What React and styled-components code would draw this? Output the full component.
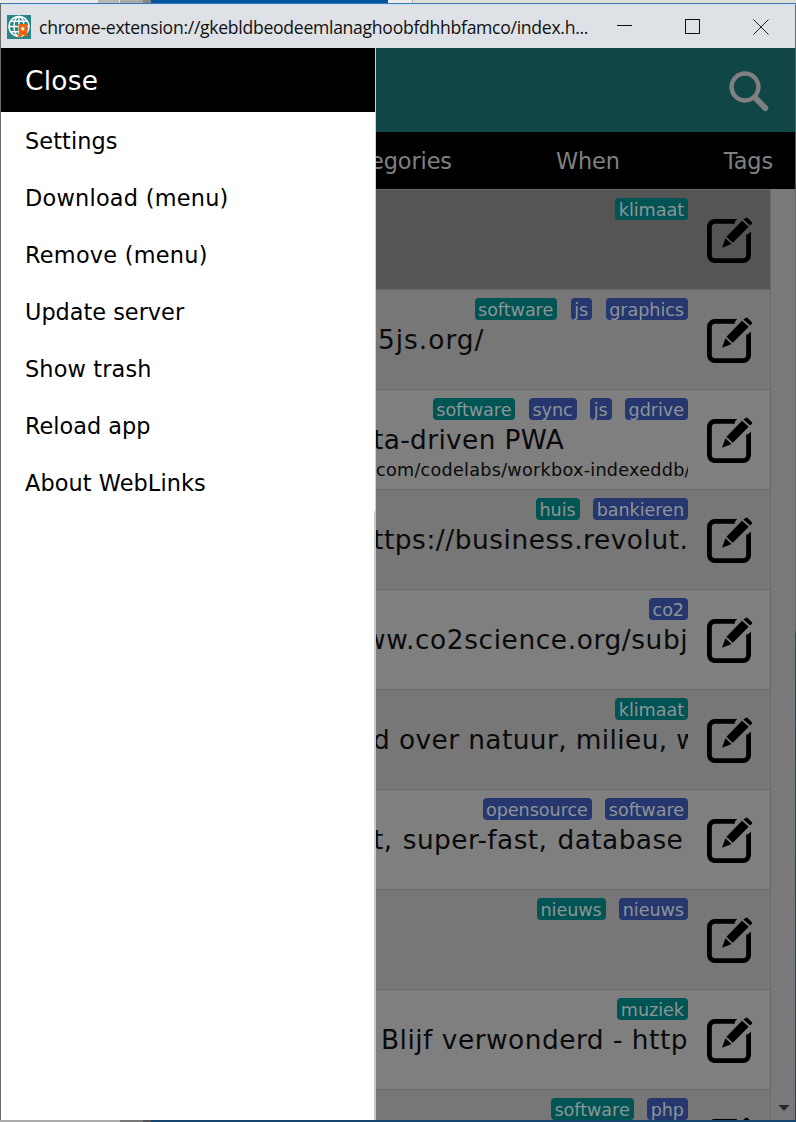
import React from 'react';
import styled, { createGlobalStyle } from 'styled-components';

const GlobalStyle = createGlobalStyle`
  *, *::before, *::after { box-sizing: border-box; }
  body { margin: 0; overflow: hidden; }
`;

const Desktop = styled.div`
  width: 796px;
  height: 1122px;
  display: flex;
  flex-direction: column;
  overflow: hidden;
  font-family: Verdana, 'DejaVu Sans', sans-serif;
`;

const TopStrip = styled.div`
  height: 3px;
  background: linear-gradient(to right, #e9e9e9 0 98px, #b9b7b4 98px 119px, #e6e6e6 119px 120px, #aaa9a7 120px 143px, #888 143px 151px, #0055a3 151px 388px, #ececec 388px 412px, #b5b5b5 412px 413px, #dfdcda 413px);
`;

const BottomStrip = styled.div`
  height: 2px;
  background: linear-gradient(to right, #aaa 0 120px, #777 120px 143px, #555 143px 151px, #16446e 151px);
`;

const Window = styled.div`
  height: 1117px;
  display: flex;
  flex-direction: column;
  border-top: 1px solid #3f78b0;
  border-left: 1px solid #6c6c6c;
`;

const TitleBar = styled.div`
  height: 44px;
  flex: none;
  display: flex;
  align-items: center;
  background: #dee1e6;
  border-top: 1px solid #c4e2fa;
  border-right: 1px solid #6c6c6c;
  padding-left: 6px;
`;

const WindowTitle = styled.div`
  width: 552px;
  margin-left: 8px;
  font: 400 17.6px/24px 'Open Sans', sans-serif;
  letter-spacing: -0.29px;
  color: #111;
  white-space: nowrap;
`;

const WindowControls = styled.div`
  display: flex;
  align-items: center;
  gap: 52px;
  margin-left: 26px;
  svg { display: block; }
`;

const Viewport = styled.div`
  position: relative;
  height: 1072px;
  display: flex;
  flex-direction: column;
  overflow: hidden;
`;

const Header = styled.header`
  height: 84px;
  flex: none;
  display: flex;
  justify-content: flex-end;
  padding: 22px 25px 0 0;
  background: #114646;
  border-right: 1px solid #5d6363;
`;

const Tabs = styled.nav`
  height: 57px;
  flex: none;
  display: flex;
  justify-content: flex-end;
  gap: 104px;
  padding-right: 22px;
  background: #000;
  border-right: 1px solid #555;
`;

const Tab = styled.span`
  font-size: 22.4px;
  line-height: 59px;
  letter-spacing: -0.1px;
  color: #808080;
`;

const Content = styled.div`
  display: flex;
  height: 931px;
`;

const List = styled.div`
  width: 770px;
  border-right: 1px solid #6a6a6a;
`;

const Scrollbar = styled.div`
  width: 25px;
  display: flex;
  align-items: flex-end;
  justify-content: center;
  padding: 0 0 8px 1px;
  background: #797979;
  border-right: 1px solid;
  border-image: linear-gradient(#666 0 440px, #14565c 446px, #1c4468 100%) 1;
  svg { display: block; }
`;

const tones = { selected: '#555555', light: '#7f7f7f', dark: '#777777' };

const Row = styled.div`
  height: 100px;
  display: flex;
  border-top: 1px solid #6a6a6a;
  background: ${(p) => tones[p.$tone]};
`;

const RowText = styled.div`
  width: 687px;
  height: 99px;
  overflow: hidden;
  padding-top: 8px;
`;

const TagLine = styled.div`
  display: flex;
  justify-content: flex-end;
  gap: 13.5px;
`;

const Tag = styled.span`
  height: 22px;
  padding: 0 4px 0 3.5px;
  border-radius: 4px;
  background: ${(p) => (p.$category ? '#005454' : '#26376f')};
  color: #8c9496;
  font-size: 17.6px;
  line-height: 24px;
  letter-spacing: -0.05px;
`;

const RowTitle = styled.div`
  padding-left: ${(p) => p.$inset}px;
  font-size: 26.4px;
  line-height: 34px;
  margin-top: 3px;
  letter-spacing: ${(p) => p.$tracking ?? 0.4}px;
  word-spacing: ${(p) => p.$wordGap ?? 0}px;
  color: #0a0a0a;
  white-space: nowrap;
`;

const RowUrl = styled.div`
  padding-left: ${(p) => p.$inset}px;
  margin-top: 1px;
  font-size: 17.6px;
  line-height: 24px;
  letter-spacing: 0.27px;
  color: #0a0a0a;
  white-space: nowrap;
`;

const EditButton = styled.div`
  padding: 27px 0 0 18px;
  svg { display: block; }
`;

const Drawer = styled.aside`
  position: absolute;
  inset: 0 auto 0 0;
  width: 375px;
  display: flex;
  flex-direction: column;
`;

const MenuPanel = styled.div`
  height: 463px;
  background: #fff;
  border-right: 1px solid #cfcfcf;
`;

const DrawerFill = styled.div`
  flex: 1;
  background: #fff;
  border-right: 2px solid #c9c9c9;
`;

const CloseItem = styled.div`
  height: 64px;
  padding-left: 24px;
  background: #000;
  color: #fff;
  font-size: 26.4px;
  line-height: 65px;
  letter-spacing: 0.25px;
`;

const MenuItem = styled.div`
  height: 57px;
  padding-left: 24px;
  color: #000;
  font-size: 22.4px;
  line-height: 59px;
  letter-spacing: ${(p) => p.$tracking ?? 0}px;
`;

const SiteIcon = () => (
  <svg width="24" height="24" viewBox="0 0 24 24">
    <rect width="24" height="24" fill="#278588" />
    <g fill="none" stroke="#fff" strokeWidth="1.4">
      <circle cx="12" cy="11.5" r="10" />
      <ellipse cx="12" cy="11.5" rx="5" ry="10" />
      <path d="M12 1.5v20M2 11.5h20M3.5 6.2h17M3.5 16.8h17" />
    </g>
    <path d="M11.5 9h8.7v13l-3.2-2-1.3 0-3.6 3-1.6-1 1.4-3z" fill="#ef6412" />
    <path d="M15.8 11.3l.7 1.5 1.6.2-1.2 1.1.3 1.6-1.4-.8-1.4.8.3-1.6-1.2-1.1 1.6-.2z" fill="#fff" />
  </svg>
);

const SearchIcon = () => (
  <svg width="42" height="42" viewBox="0 0 42 42" fill="none" stroke="#808080">
    <circle cx="17" cy="17" r="13.4" strokeWidth="4.5" />
    <path d="M27 27.5L37.2 38" strokeWidth="6" strokeLinecap="round" />
  </svg>
);

const EditIcon = () => (
  <svg width="47" height="47" viewBox="0 0 47 47">
    <path d="M28.8 4.4H8.9a5.5 5.5 0 0 0-5.5 5.5v28.2a5.5 5.5 0 0 0 5.5 5.5h28.2a5.5 5.5 0 0 0 5.5-5.5V17.6" fill="none" stroke="#000" strokeWidth="4.8" />
    <path d="M27 2h4.3l-4.4 4.8H27zM45 14.8v4h-4.8v-.3z" />
    <path d="M16 30.8l3.4-9.5 6.2 5.7zM20.5 19.8L36 3.7l6.7 6.1-15.9 15.9zM37.4 2.5L39.6.9q1-.8 2 0l4.1 4.1q.9 1 .2 1.8l-1.7 1.8z" />
  </svg>
);

const menu = [
  ['Settings', 0.1],
  ['Download (menu)', 0.25],
  ['Remove (menu)', 0.25],
  ['Update server'],
  ['Show trash', 0.15],
  ['Reload app'],
  ['About WebLinks', 0.08],
];

const rows = [
  { tone: 'selected', tags: [['klimaat', true]] },
  { tone: 'dark', tags: [['software', true], ['js'], ['graphics']], title: '5js.org/', inset: 377, tracking: 1 },
  { tone: 'light', tags: [['software', true], ['sync'], ['js'], ['gdrive']], title: 'ta-driven PWA', inset: 372, tracking: 0.35, url: 'com/codelabs/workbox-indexeddb/', urlInset: 375 },
  { tone: 'dark', tags: [['huis', true], ['bankieren']], title: 'ttps://business.revolut.', inset: 372, tracking: 0.55 },
  { tone: 'light', tags: [['co2']], title: 'ww.co2science.org/subj', inset: 363, tracking: 0.6 },
  { tone: 'dark', tags: [['klimaat', true]], title: 'd over natuur, milieu, w', inset: 372 },
  { tone: 'light', tags: [['opensource'], ['software']], title: 't, super-fast, database', inset: 372, wordGap: 1.5 },
  { tone: 'dark', tags: [['nieuws', true], ['nieuws']] },
  { tone: 'light', tags: [['muziek', true]], title: 'Blijf verwonderd - http', inset: 380, tracking: 0.5 },
  { tone: 'dark', tags: [['software', true], ['php']] },
];

export default function App() {
  return (
    <Desktop>
      <GlobalStyle />
      <TopStrip />
      <Window>
        <TitleBar>
          <SiteIcon />
          <WindowTitle>chrome-extension://gkebldbeodeemlanaghoobfdhhbfamco/index.h...</WindowTitle>
          <WindowControls>
            <svg width="16" height="16" stroke="#111"><path d="M0 6.5h15" /></svg>
            <svg width="16" height="16" fill="none" stroke="#111"><rect x=".5" y=".5" width="14" height="14" /></svg>
            <svg width="16" height="16" stroke="#222"><path d="M.5.5l15 15M15.5.5l-15 15" /></svg>
          </WindowControls>
        </TitleBar>
        <Viewport>
          <Header><SearchIcon /></Header>
          <Tabs>
            <Tab>Categories</Tab>
            <Tab>When</Tab>
            <Tab>Tags</Tab>
          </Tabs>
          <Content>
            <List>
              {rows.map((row, i) => (
                <Row key={i} $tone={row.tone}>
                  <RowText>
                    <TagLine>
                      {row.tags.map(([label, category]) => (
                        <Tag key={`${label}${category}`} $category={category}>{label}</Tag>
                      ))}
                    </TagLine>
                    {row.title && (
                      <RowTitle $inset={row.inset} $tracking={row.tracking} $wordGap={row.wordGap}>{row.title}</RowTitle>
                    )}
                    {row.url && <RowUrl $inset={row.urlInset}>{row.url}</RowUrl>}
                  </RowText>
                  <EditButton><EditIcon /></EditButton>
                </Row>
              ))}
            </List>
            <Scrollbar>
              <svg width="12" height="8"><path d="M.5 1h11L6 7z" fill="#282828" /></svg>
            </Scrollbar>
          </Content>
          <Drawer>
            <MenuPanel>
              <CloseItem>Close</CloseItem>
              {menu.map(([label, tracking]) => (
                <MenuItem key={label} $tracking={tracking}>{label}</MenuItem>
              ))}
            </MenuPanel>
            <DrawerFill />
          </Drawer>
        </Viewport>
      </Window>
      <BottomStrip />
    </Desktop>
  );
}
